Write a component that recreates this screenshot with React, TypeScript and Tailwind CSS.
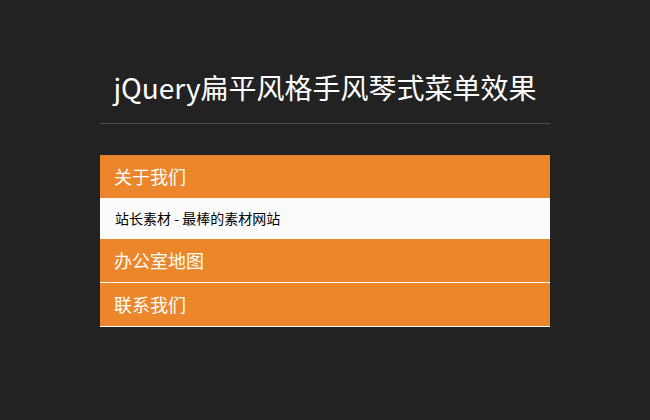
import React from "react";

export default function App() {
  const font = { fontFamily: '"Noto Sans CJK SC", "Noto Sans", sans-serif' };
  return (
    <div className="w-[650px] h-[420px] bg-[#222222] overflow-hidden" style={font}>
      <div className="w-[450px] mx-auto pt-[67px]">
        <h1 className="text-[28px] leading-[41px] text-white text-center font-normal">
          jQuery扁平风格手风琴式菜单效果
        </h1>
        <div className="mt-[15px] h-px bg-[#4d4d4d]" />
        <div className="mt-[31px]">
          <div className="h-[43px] bg-[#eb862a] text-white text-[18px] flex items-center pl-[14px]">
            关于我们
          </div>
          <div className="h-[41px] bg-[#fbfbfb] text-black text-[14px] flex items-center pl-[15px] whitespace-pre">
            站长素材 - 最棒的素材网站
          </div>
          <div className="h-[44px] bg-[#eb862a] text-white text-[18px] flex items-center pl-[14px] border-b border-white">
            办公室地图
          </div>
          <div className="h-[44px] bg-[#eb862a] text-white text-[18px] flex items-center pl-[14px] border-b border-white">
            联系我们
          </div>
        </div>
      </div>
    </div>
  );
}
